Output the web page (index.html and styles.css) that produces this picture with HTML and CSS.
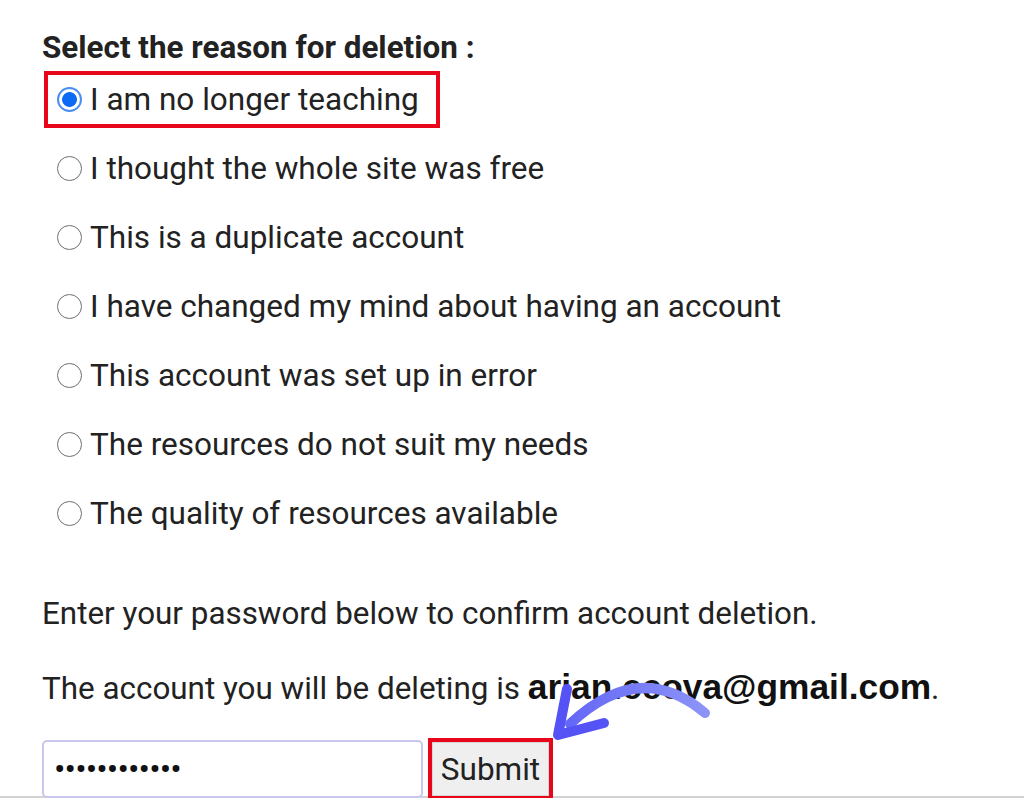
FILE: index.html
```html
<!DOCTYPE html>
<html lang="en">
<head>
<meta charset="utf-8">
<title>Delete account</title>
<link rel="stylesheet" href="styles.css">
</head>
<body>
<main class="page">
  <h3 class="title">Select the reason for deletion :</h3>
  <div class="reasons">
    <div class="reason"><label class="opt hl"><input type="radio" name="r" checked><span>I am no longer teaching</span></label></div>
    <div class="reason"><label class="opt"><input type="radio" name="r"><span>I thought the whole site was free</span></label></div>
    <div class="reason"><label class="opt"><input type="radio" name="r"><span>This is a duplicate account</span></label></div>
    <div class="reason"><label class="opt"><input type="radio" name="r"><span>I have changed my mind about having an account</span></label></div>
    <div class="reason"><label class="opt"><input type="radio" name="r"><span>This account was set up in error</span></label></div>
    <div class="reason"><label class="opt"><input type="radio" name="r"><span>The resources do not suit my needs</span></label></div>
    <div class="reason"><label class="opt"><input type="radio" name="r"><span>The quality of resources available</span></label></div>
  </div>
  <p class="confirm">Enter your password below to confirm account deletion.</p>
  <p class="account">The account you will be deleting is <strong class="email">arian.ccova@gmail.com</strong>.</p>
  <form class="pw-row" onsubmit="return false">
    <input class="pw" type="password" value="xxxxxxxxxxxx">
    <span class="hl-btn"><button class="submit" type="submit">Submit</button></span>
  </form>
  <svg class="arrow" width="180" height="80" viewBox="0 0 180 80" aria-hidden="true">
    <defs>
      <linearGradient id="ag" x1="1" y1="0" x2="0" y2="0">
        <stop offset="0" stop-color="#8c93f7"/>
        <stop offset="1" stop-color="#6468f6"/>
      </linearGradient>
    </defs>
    <path d="M165 43 Q100 -12 30 54" fill="none" stroke="url(#ag)" stroke-width="10" stroke-linecap="round"/>
    <path d="M27 19 L18 65 L64 53" fill="none" stroke="#5552f6" stroke-width="10" stroke-linecap="round" stroke-linejoin="round"/>
  </svg>
</main>
</body>
</html>
```

FILE: styles.css
```css
html, body {
  margin: 0;
  padding: 0;
  background: #fff;
}

body {
  font-family: Roboto, "Liberation Sans", Arial, sans-serif;
  color: #222;
  overflow: hidden;
}

.page {
  position: relative;
  box-sizing: border-box;
  height: 798px;
  padding: 30px 0 0 42px;
  border-bottom: 2px solid #d2d2d2;
}

.title {
  margin: 0;
  font-size: 31.4px;
  line-height: 35px;
  font-weight: 700;
  color: #222;
}

.reasons {
  display: flex;
  flex-direction: column;
}

.reason {
  height: 69px;
  display: flex;
  align-items: center;
}

.opt {
  display: inline-flex;
  align-items: center;
  gap: 8px;
  height: 49px;
  padding: 0 17px 0 9px;
  margin-left: 2px;
  border: 4px solid transparent;
  font-size: 31.5px;
  line-height: 40px;
}

.opt.hl {
  border-color: #e8061a;
}

.opt input {
  appearance: none;
  -webkit-appearance: none;
  box-sizing: border-box;
  width: 25px;
  height: 25px;
  margin: 0;
  border: 1.5px solid #6f6f6f;
  border-radius: 50%;
  background: #fff;
  flex: none;
}

.opt input:checked {
  border: 2px solid #4a8ef0;
  background: radial-gradient(circle, #0b6bf4 0 7px, #fff 7.8px);
}

.confirm,
.account {
  margin: 0;
  font-size: 31.4px;
  line-height: 40px;
}

.confirm {
  margin-top: 46px;
}

.account {
  margin-top: 35px;
}

.email {
  font-family: "Liberation Sans", Arial, sans-serif;
  font-weight: 700;
  font-size: 35.3px;
  line-height: 1;
  color: #111;
}

.pw-row {
  display: flex;
  align-items: center;
  gap: 5px;
  margin-top: 29px;
}

.pw {
  box-sizing: border-box;
  width: 381px;
  height: 58px;
  margin: 0;
  padding: 0 10px;
  border: 2px solid #c9c8ec;
  border-radius: 5px;
  font-family: Roboto, sans-serif;
  font-size: 34px;
  letter-spacing: -0.9px;
  color: #111;
  background: #fff;
  outline: none;
}

.hl-btn {
  display: inline-flex;
  border: 4px solid #e8061a;
}

.submit {
  box-sizing: border-box;
  height: 54px;
  width: 117px;
  margin: 0;
  padding: 0;
  border: 1px solid #d6d6d6;
  background: #efefef;
  font-family: Roboto, sans-serif;
  font-size: 31.5px;
  color: #222;
}

.arrow {
  position: absolute;
  left: 540px;
  top: 670px;
  overflow: visible;
}
```
